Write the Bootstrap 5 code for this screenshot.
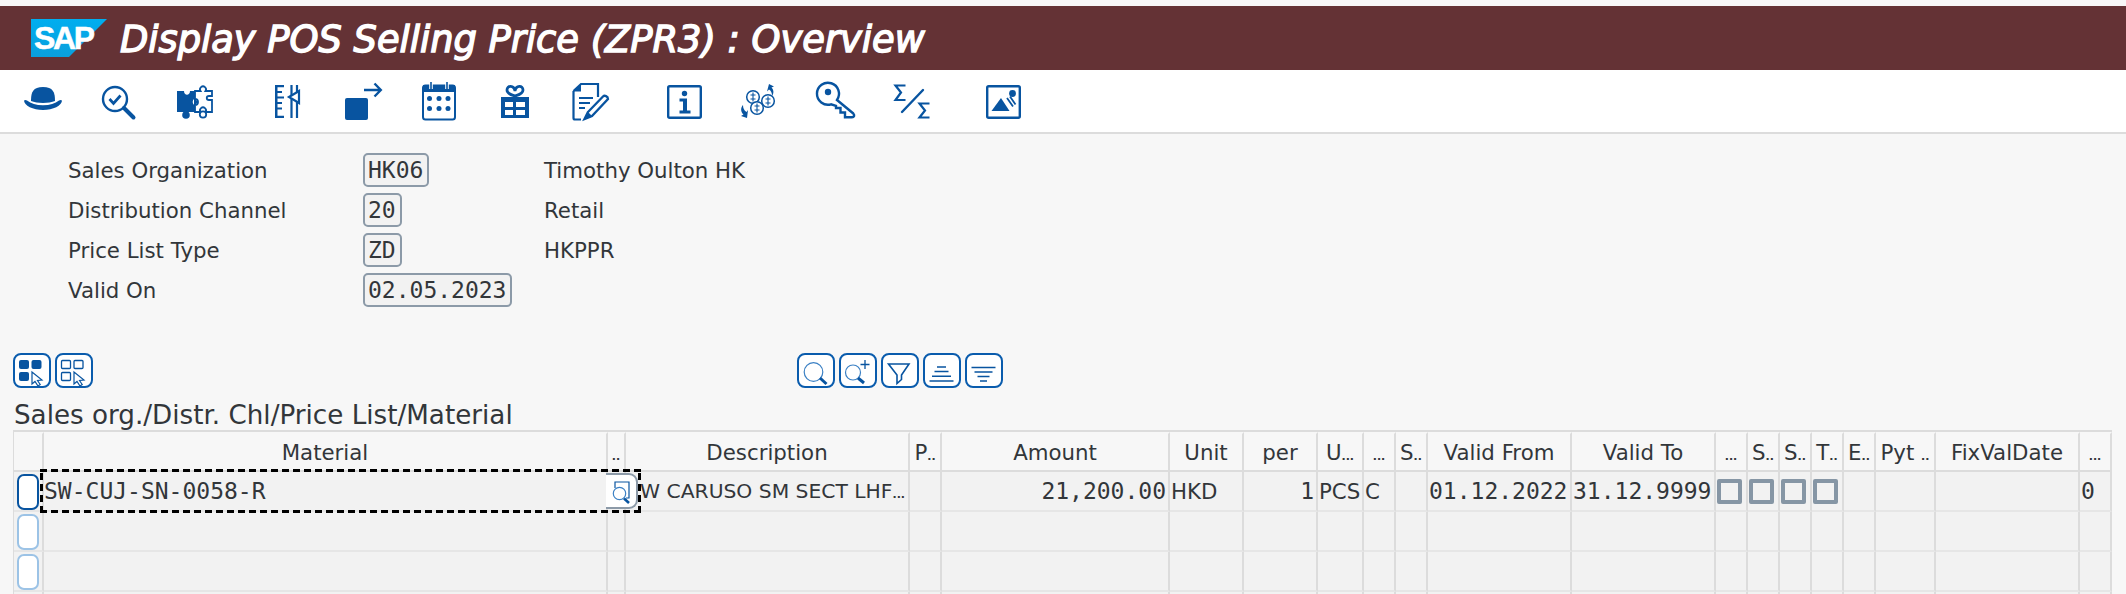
<!DOCTYPE html>
<html lang="en">
<head>
<meta charset="utf-8">
<title>Display POS Selling Price (ZPR3) : Overview</title>
<link rel="stylesheet" href="https://cdn.jsdelivr.net/npm/bootstrap@5.3.0/dist/css/bootstrap.min.css">
<style>
html,body{height:594px;overflow:hidden}
body{background:#f7f7f7;color:#32363a;font-family:"DejaVu Sans",sans-serif;font-size:21.3px;padding-top:6px}
.title-bar{height:64px;background:#643235;padding-left:31px;gap:13px}
.title-bar svg{width:76px;height:38px;flex:none}
.title-text{font-size:36.8px;font-style:italic;color:#fff;-webkit-text-stroke:1.4px #fff;margin:0;line-height:1;font-weight:400;white-space:nowrap;position:relative;top:2px}
.logo-word{font-family:"Liberation Sans",sans-serif;font-weight:700;font-size:32px;fill:#fff;letter-spacing:-2.400px;stroke:#fff;stroke-width:.5px}
.tool-bar{height:64px;background:#fff;border-bottom:2px solid #dcdcdc;padding-left:5px}
.tool-btn{width:76px;height:62px;padding:0;border:0;display:flex;align-items:center;justify-content:center;background:none}
.tool-btn svg{width:40px;height:40px;display:block;overflow:visible}
.grp-a{margin-left:15px}
.grp-b{margin-left:17px}
.grp-c{margin-left:15px}
.ic{fill:#0854a0;stroke:none}
.ln{fill:none;stroke:#0854a0;stroke-width:2.4}
.head-form{display:grid;grid-template-columns:295px 181px 1fr;row-gap:6px;padding:19px 0 0 68px}
.head-form>div{height:34px;line-height:35px;white-space:nowrap}
.val-box{display:inline-block;font-family:"DejaVu Sans Mono",monospace;font-size:23px;height:34px;line-height:30px;padding:0 4px 0 3px;border:2px solid #8c9aa8;border-radius:5px;background:#f2f2f2;vertical-align:top}
.grid-tools{margin:46px 0 0 13px;gap:4px;height:35px}
.sq-btn{width:38px;height:35px;padding:0;border:2px solid #0a5cad;border-radius:8px;background:#fff;display:block}
.sq-btn svg{display:block;width:34px;height:31px}
.sq-gap{margin-left:700px}
.thin{fill:none;stroke:#0854a0;stroke-width:1.3}
.thin2{fill:none;stroke:#0854a0;stroke-width:1.6}
.grid-title{font-size:26.2px;line-height:30px;margin:12px 0 0 14px;height:30px;font-weight:400;white-space:nowrap}
.grid-wrap{width:2099px;margin-left:13px;border-left:1px solid #dcdcdc;border-top:2px solid #dcdcdc}
.table.sap-grid{--bs-table-bg:transparent;--bs-table-color:#32363a;table-layout:fixed;width:2098px;margin:0;border-collapse:separate;border-spacing:0;font-size:21.300px;color:#32363a}
.table.sap-grid col:nth-child(1){width:30px}
.table.sap-grid col:nth-child(2){width:564px}
.table.sap-grid col:nth-child(3){width:18px}
.table.sap-grid col:nth-child(4){width:284px}
.table.sap-grid col:nth-child(5){width:32px}
.table.sap-grid col:nth-child(6){width:228px}
.table.sap-grid col:nth-child(7),.table.sap-grid col:nth-child(8){width:74px}
.table.sap-grid col:nth-child(9){width:46px}
.table.sap-grid col:nth-child(10),.table.sap-grid col:nth-child(11){width:32px}
.table.sap-grid col:nth-child(12),.table.sap-grid col:nth-child(13){width:144px}
.table.sap-grid col:nth-child(n+14):nth-child(-n+18){width:32px}
.table.sap-grid col:nth-child(19){width:60px}
.table.sap-grid col:nth-child(20){width:144px}
.table.sap-grid col:nth-child(21){width:32px}
.table.sap-grid th,.table.sap-grid td{padding:0;white-space:nowrap;overflow:hidden;vertical-align:middle;border-style:solid;border-width:0 2px 2px 0}
.table.sap-grid th{height:40px;font-weight:400;text-align:center;background:#f7f7f7;border-color:#f7f7f7 #dcdcdc #dcdcdc #dcdcdc;border-top:2px solid #f7f7f7;border-bottom-color:#dcdcdc;line-height:1.2;padding-top:1px}
.table.sap-grid td{height:40px;background:#f2f2f2;border-color:#e6e6e6 #dcdcdc #e6e6e6 #e6e6e6;line-height:1.2;padding-top:1px}
.dots{font-style:normal;font-size:11px;font-weight:700;letter-spacing:0}
.mono{font-family:"DejaVu Sans Mono",monospace;font-size:23px}
.table.sap-grid td.pl1{padding-left:1px}
.table.sap-grid td.pr3{padding-right:2px;text-align:right}
.table.sap-grid td.focus-cell{position:relative;overflow:visible;z-index:3;padding-left:0}
.table.sap-grid td.desc{padding-left:14px;font-size:20.300px}
.row-sel{display:block;width:22px;height:36px;margin-left:3px;background:#fff;border:2px solid #9cc3e6;border-radius:7px}
.row-sel.on{border-color:#0854a0}
.focus-box{position:absolute;left:-4px;top:-3px;width:601px;height:44px;pointer-events:none;
  background:
    repeating-linear-gradient(90deg,#000 0 7px,transparent 7px 11px) top left/100% 3px no-repeat,
    repeating-linear-gradient(90deg,#000 0 7px,transparent 7px 11px) bottom left/100% 3px no-repeat,
    repeating-linear-gradient(0deg,#000 0 7px,transparent 7px 11px) top left/3px 100% no-repeat,
    repeating-linear-gradient(0deg,#000 0 7px,transparent 7px 11px) top right/3px 100% no-repeat}
.f4-btn{position:absolute;left:562px;top:1px;width:32px;height:36px;background:#fff;border:2px solid #8c9aa8;border-left:0;border-radius:0 9px 9px 0}
.f4-btn svg{display:block;width:30px;height:32px}
.form-check-input.tick{width:25px;height:25px;margin:0 0 0 1px;border:4.500px solid #8696a5;border-radius:2px;background:transparent;display:block;float:none}
</style>
</head>
<body>
<header class="title-bar d-flex align-items-center">
  <svg viewBox="0 0 76 38" aria-label="SAP logo"><defs><linearGradient id="sapg" x1="0" y1="0" x2="0" y2="1"><stop offset="0" stop-color="#00aeef"/><stop offset="1" stop-color="#0a9fdc"/></linearGradient></defs><polygon points="0,0 76,0 38,38 0,38" fill="url(#sapg)"/><text x="3" y="30" class="logo-word">SAP</text></svg>
  <h1 class="title-text">Display POS Selling Price (ZPR3) : Overview</h1>
</header>

<nav class="tool-bar d-flex align-items-center">
  <button class="btn tool-btn" aria-label="Hat"><svg viewBox="0 0 40 40"><path class="ic" d="M8 20C8 11 10 6 20 6s12 5 12 14c-6 2.500-18 2.500-24 0z"/><path class="ic" d="M1 19.500c1-.8 2-.8 3 0 4 3.200 9 4.700 16 4.700s12-1.500 16-4.700c1-.8 2-.8 3 0 0 5-9 9.500-19 9.500S1 24.500 1 19.500z"/></svg></button>
  <button class="btn tool-btn" aria-label="Check"><svg viewBox="0 0 40 40"><circle class="ln" cx="16" cy="18" r="12"/><path d="M25 27l9.500 9.500" fill="none" stroke="#0854a0" stroke-width="4" stroke-linecap="round"/><path d="M10.500 18l4 4.500 7-8" fill="none" stroke="#0854a0" stroke-width="2.700"/></svg></button>
  <button class="btn tool-btn" aria-label="Puzzle"><svg viewBox="0 0 40 40"><path class="ic" d="M2 10h7c0 5 6 5 6 0h5v8c-3-.5-3 6 0 6v7H2z"/><path d="M20 10h5.500a3 3 0 1 1 5 0H37v5h-3c-3 0-3 4 0 4h3v12h-6.500a3 3 0 1 0-5 0H20v-7c4 0 4-6 0-6z" fill="#fff" stroke="#0854a0" stroke-width="1.800"/><circle class="ic" cx="11" cy="34" r="3.800"/><path class="ic" d="M19 17.500l4.500 3.500-4.500 3.500z"/><circle cx="28" cy="33.500" r="3.200" fill="#fff" stroke="#0854a0" stroke-width="1.800"/></svg></button>
  <button class="btn tool-btn grp-a" aria-label="Ruler"><svg viewBox="0 0 40 40"><path class="ic" d="M9 4h2.500v33H9zM11 4h7v2.300h-7zM11 10h5v2h-5zM11 15.500h7v2h-7zM11 21h5v2h-5zM11 26.500h5v2h-5zM11 34.700h7V37h-7z"/><path d="M25.500 4v33M31 4v33" fill="none" stroke="#0854a0" stroke-width="2.200"/><path d="M23 16l10-6v12z" fill="#fff" stroke="#0854a0" stroke-width="2.200"/></svg></button>
  <button class="btn tool-btn" aria-label="Export"><svg viewBox="0 0 40 40"><rect class="ic" x="3" y="17" width="23" height="22" rx="2"/><path d="M22 9h16M32.500 2.500l6.300 6.500-6.300 6.500" fill="none" stroke="#0854a0" stroke-width="2.400"/></svg></button>
  <button class="btn tool-btn" aria-label="Calendar"><svg viewBox="0 0 40 40"><rect x="5" y="4.500" width="32" height="34" rx="2.500" fill="#fff" stroke="#0854a0" stroke-width="2"/><rect class="ic" x="5" y="4" width="32" height="7"/><path d="M13 1v7M29 1v7" stroke="#fff" stroke-width="3.600"/><path d="M13 1v7M29 1v7" stroke="#0854a0" stroke-width="1.600"/><g class="ic"><circle cx="11.500" cy="17.500" r="2.500"/><circle cx="21" cy="17.500" r="2.500"/><circle cx="30" cy="17.500" r="2.500"/><circle cx="11.500" cy="27.500" r="2.500"/><circle cx="21" cy="27.500" r="2.500"/><circle cx="30" cy="27.500" r="2.500"/></g></svg></button>
  <button class="btn tool-btn" aria-label="Gift"><svg viewBox="0 0 40 40"><path d="M21 15c-3-1-8-2-8-6 0-5 7-5 8 1 1-6 8-6 8-1 0 4-5 5-8 6z" fill="none" stroke="#0854a0" stroke-width="2.800"/><path class="ic" fill-rule="evenodd" d="M7 16h28v21H7zM11 21v5h8v-5zM22 21v5h9v-5zM11 29v5h8v-5zM22 29v5h9v-5z"/></svg></button>
  <button class="btn tool-btn" aria-label="Edit document"><svg viewBox="0 0 40 40"><path d="M3.500 10L11 3h17v13M3.500 10v27a1.500 1.500 0 0 0 1.500 1.500h6" fill="none" stroke="#0854a0" stroke-width="2.200"/><path class="ic" d="M3 10.500L11 3v7.500z"/><path d="M9 17h14M9 22h11M9 27h6" stroke="#0854a0" stroke-width="2" fill="none"/><path d="M18 31L33 15.500c1.500-1.500 5-.5 5 2.500L22 35l-7.500 3z" fill="#fff" stroke="#0854a0" stroke-width="2.300"/><path d="M14 38.500l4.500-7 4 4z" class="ic"/></svg></button>
  <button class="btn tool-btn grp-b" aria-label="Information"><svg viewBox="0 0 40 40"><rect x="5.200" y="5.200" width="32.600" height="31.600" rx="1.500" fill="#fff" stroke="#0854a0" stroke-width="2.400"/><circle class="ic" cx="21.500" cy="12.500" r="2.700"/><path class="ic" d="M16.500 17.500h7.500v12h3.500v3h-11v-3h3.500v-9h-3.500z"/></svg></button>
  <button class="btn tool-btn" aria-label="Currency"><svg viewBox="0 0 40 40"><g fill="#fff" stroke="#0854a0" stroke-width="1.500"><circle cx="14" cy="16" r="6.300"/><circle cx="29" cy="20" r="6.300"/><circle cx="18" cy="27" r="6.300"/></g><path d="M14 11.500v9M11.500 14h5M11.500 18h5M29 15.500v9M26.500 18h5M26.500 22h5M18 22.500v9M15.500 25h5M15.500 29h5" stroke="#0854a0" stroke-width="1.100" fill="none"/><path d="M30 3l5 2.500-2.500 1c2.500 2.500 2.500 6 .5 8.500 0-3-1-5.500-3-6.500l-2 2z" class="ic"/><path d="M8 37l-6-2 2.500-1.500C1.500 31 1.500 26.500 4 24c0 3 1 5.500 3.500 7l1.500-2z" class="ic"/></svg></button>
  <button class="btn tool-btn" aria-label="Key"><svg viewBox="0 0 40 40"><path class="ln" d="M22 19L38.300 32.500c1.700 1.800.8 3.700-1.300 3.700h-7v-4.700h-4.500V27H21v-2.200L16 23.300A11 11 0 1 1 22 19z"/><circle class="ic" cx="13" cy="11" r="3.200"/></svg></button>
  <button class="btn tool-btn" aria-label="Sum ratio"><svg viewBox="0 0 40 40"><path d="M14.500 4.500H4.500L10 11.500 4.500 19H14.500M38.500 22.500H28.500L34 29.500 28.500 36.500H38.500" fill="none" stroke="#0854a0" stroke-width="2.200"/><path d="M11 31L32 9" stroke="#0854a0" stroke-width="2.400" stroke-linecap="round"/></svg></button>
  <button class="btn tool-btn grp-c" aria-label="Image"><svg viewBox="0 0 40 40"><rect x="5.200" y="5.200" width="32.600" height="31.600" rx="1.500" fill="#fff" stroke="#0854a0" stroke-width="2.400"/><circle class="ic" cx="30.500" cy="12.500" r="3.400"/><path class="ic" d="M9.500 30L19 17l8.500 13z"/><path d="M25 17l6 8.500M28 15.500l5.500 8" stroke="#0854a0" stroke-width="1.800" fill="none"/></svg></button>
</nav>

<main>
  <section class="head-form">
    <div>Sales Organization</div><div><span class="val-box">HK06</span></div><div>Timothy Oulton HK</div>
    <div>Distribution Channel</div><div><span class="val-box">20</span></div><div>Retail</div>
    <div>Price List Type</div><div><span class="val-box">ZD</span></div><div>HKPPR</div>
    <div>Valid On</div><div><span class="val-box">02.05.2023</span></div><div></div>
  </section>

  <div class="grid-tools d-flex">
    <button class="btn sq-btn" aria-label="Select all"><svg viewBox="2 2 34 31"><g class="ic"><rect x="6" y="7" width="10" height="9" rx="2"/><rect x="18.500" y="7" width="10" height="9" rx="2"/><rect x="6" y="19" width="10" height="9" rx="2"/></g><path d="M19 19v12l3-2.500 3 4.500 2.200-1.500-2.700-4 4.500-.5z" fill="#fff" stroke="#0854a0" stroke-width="1.200"/></svg></button>
    <button class="btn sq-btn" aria-label="Deselect all"><svg viewBox="2 2 34 31"><g class="thin"><rect x="6.500" y="7.500" width="9" height="8" rx="1"/><rect x="19" y="7.500" width="9" height="8" rx="1"/><rect x="6.500" y="19.500" width="9" height="8" rx="1"/></g><path d="M19 19v12l3-2.500 3 4.500 2.200-1.500-2.700-4 4.500-.5z" fill="#fff" stroke="#0854a0" stroke-width="1.200"/></svg></button>
    <button class="btn sq-btn sq-gap" aria-label="Find"><svg viewBox="2 2 34 31"><circle cx="16.500" cy="19" r="9.300" fill="none" stroke="#3b80c4" stroke-width="1.200"/><path d="M23 25l6.500 6" stroke="#0854a0" stroke-width="3" fill="none"/></svg></button>
    <button class="btn sq-btn" aria-label="Find next"><svg viewBox="2 2 34 31"><circle cx="14" cy="19.500" r="7.500" fill="none" stroke="#3b80c4" stroke-width="1.200"/><path d="M19 25l6 5" stroke="#0854a0" stroke-width="3" fill="none"/><path d="M26 7v9M21.500 11.500h9" stroke="#0854a0" stroke-width="1.300" fill="none"/></svg></button>
    <button class="btn sq-btn" aria-label="Filter"><svg viewBox="2 2 34 31"><path class="thin2" d="M7.500 11H28L20.500 22v4.500L16 30.500V22z"/></svg></button>
    <button class="btn sq-btn" aria-label="Sort ascending"><svg viewBox="2 2 34 31"><path d="M14 14h9M11.500 18.500h14M9 23.300h19M6.500 28h24" stroke="#0854a0" stroke-width="1.500" fill="none"/></svg></button>
    <button class="btn sq-btn" aria-label="Sort descending"><svg viewBox="2 2 34 31"><path d="M6.500 14.500h24M9.500 19h18M12.500 23.500h12M15 28h7" stroke="#0854a0" stroke-width="1.500" fill="none"/></svg></button>
  </div>

  <h2 class="grid-title">Sales org./Distr. Chl/Price List/Material</h2>

  <div class="grid-wrap">
    <table class="table sap-grid">
      <colgroup><col><col><col><col><col><col><col><col><col><col><col><col><col><col><col><col><col><col><col><col><col></colgroup>
      <thead><tr>
        <th></th><th>Material</th><th><i class="dots">..</i></th><th>Description</th><th>P<i class="dots">..</i></th><th>Amount</th><th>Unit</th><th>per</th><th>U<i class="dots">...</i></th><th><i class="dots">...</i></th><th>S<i class="dots">..</i></th><th>Valid From</th><th>Valid To</th><th><i class="dots">...</i></th><th>S<i class="dots">..</i></th><th>S<i class="dots">..</i></th><th>T<i class="dots">..</i></th><th>E<i class="dots">..</i></th><th>Pyt <i class="dots">..</i></th><th>FixValDate</th><th><i class="dots">...</i></th>
      </tr></thead>
      <tbody>
        <tr>
          <td><span class="row-sel on"></span></td>
          <td class="focus-cell mono">SW-CUJ-SN-0058-R<span class="focus-box"></span><span class="f4-btn"><svg viewBox="0 0 30 32"><path d="M9 13V7h14v16h-3" fill="none" stroke="#0854a0" stroke-width="1.200"/><circle cx="13.500" cy="18.500" r="6.200" fill="none" stroke="#3b80c4" stroke-width="1.200"/><path d="M18 23.500l5 4.500" stroke="#0854a0" stroke-width="2.600"/></svg></span></td>
          <td></td>
          <td class="desc">W CARUSO SM SECT LHF<i class="dots">...</i></td>
          <td></td>
          <td class="mono pr3">21,200.00</td>
          <td class="pl1">HKD</td>
          <td class="mono pr3">1</td>
          <td class="pl1">PCS</td>
          <td class="pl1">C</td>
          <td></td>
          <td class="mono pl1">01.12.2022</td>
          <td class="mono pl1">31.12.9999</td>
          <td><input class="form-check-input tick" type="checkbox" aria-label="Flag 1"></td>
          <td><input class="form-check-input tick" type="checkbox" aria-label="Flag 2"></td>
          <td><input class="form-check-input tick" type="checkbox" aria-label="Flag 3"></td>
          <td><input class="form-check-input tick" type="checkbox" aria-label="Flag 4"></td>
          <td></td><td></td><td></td>
          <td class="mono pl1">0</td>
        </tr>
        <tr><td><span class="row-sel"></span></td><td></td><td></td><td></td><td></td><td></td><td></td><td></td><td></td><td></td><td></td><td></td><td></td><td></td><td></td><td></td><td></td><td></td><td></td><td></td><td></td></tr>
        <tr><td><span class="row-sel"></span></td><td></td><td></td><td></td><td></td><td></td><td></td><td></td><td></td><td></td><td></td><td></td><td></td><td></td><td></td><td></td><td></td><td></td><td></td><td></td><td></td></tr>
        <tr><td><span class="row-sel"></span></td><td></td><td></td><td></td><td></td><td></td><td></td><td></td><td></td><td></td><td></td><td></td><td></td><td></td><td></td><td></td><td></td><td></td><td></td><td></td><td></td></tr>
      </tbody>
    </table>
  </div>
</main>
<script src="https://cdn.jsdelivr.net/npm/bootstrap@5.3.0/dist/js/bootstrap.bundle.min.js"></script>
</body>
</html>
